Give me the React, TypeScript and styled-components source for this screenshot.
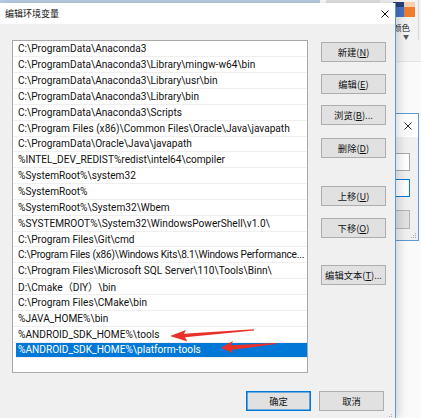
import React from "react";
import styled, { createGlobalStyle } from "styled-components";

const LATIN = `"Roboto", "Noto Sans CJK SC", sans-serif`;
const CJK = `"Noto Sans CJK SC", "Noto Sans", sans-serif`;

const Global = createGlobalStyle`
  html, body { margin: 0; padding: 0; background: #fbfbfb; }
  body { width: 421px; height: 418px; overflow: hidden; }
`;

const Desktop = styled.div`
  position: relative;
  width: 421px;
  height: 418px;
  overflow: hidden;
  background: #fafafa;
`;

/* ---------- background windows ---------- */
const TopStrip = styled.div`
  position: absolute;
  left: 0;
  top: 0;
  width: 421px;
  height: 3px;
  display: flex;
  background: #ffffff;
`;
const StripPart = styled.div<{ $w: number; $c: string }>`
  width: ${(p) => p.$w}px;
  height: 100%;
  background: ${(p) => p.$c};
`;

const Ribbon = styled.div`
  position: absolute;
  left: 380px;
  top: 0;
  width: 41px;
  height: 62px;
  background: #f3f3f3;
  border-bottom: 1px solid #e4e4e4;
  box-sizing: border-box;
  display: flex;
`;
const RibbonGroup = styled.div`
  width: 39px;
  height: 40px;
  border-right: 1px solid #d6d6d6;
  display: flex;
  flex-direction: column;
  align-items: flex-start;
  padding: 2px 0 0 13px;
  box-sizing: border-box;
`;
const ColorIcon = styled.div`
  display: flex;
  width: 22px;
  height: 15px;
`;
const Swatch = styled.div<{ $top: string; $main: string }>`
  flex: 1;
  background: linear-gradient(${(p) => p.$top} 0 33%, ${(p) => p.$main} 33% 100%);
`;
const RibbonLabel = styled.div`
  font-family: ${CJK};
  font-size: 8.5px;
  line-height: 10px;
  margin-top: 5px;
  color: #222;
  white-space: nowrap;
`;
const RibbonCaret = styled.div`
  font-family: ${LATIN};
  font-size: 6px;
  line-height: 6px;
  margin: 2px 0 0 10px;
  color: #555;
`;

const SecondWin = styled.div`
  position: absolute;
  left: 360px;
  top: 113px;
  width: 59px;
  height: 128px;
  border: 1px solid #5d9bd6;
  box-sizing: border-box;
  background: #f0f0f0;
  display: flex;
  flex-direction: column;
`;
const SecondTitle = styled.div`
  height: 23px;
  background: #ffffff;
  display: flex;
  align-items: center;
  justify-content: flex-end;
  padding-right: 6px;
`;
const SecondBody = styled.div`
  flex: 1;
  display: flex;
  flex-direction: column;
  align-items: flex-end;
  padding: 16px 8px 0 0;
  gap: 8px;
  position: relative;
`;
const MiniInput = styled.div<{ $focus?: boolean }>`
  width: 40px;
  height: 18px;
  box-sizing: border-box;
  background: #fff;
  border: 1px solid ${(p) => (p.$focus ? "#0078d7" : "#a9a9a9")};
`;
const MiniButton = styled.div`
  width: 40px;
  height: 19px;
  margin-top: 5px;
  box-sizing: border-box;
  background: #e1e1e1;
  border: 1px solid #b4b4b4;
`;
const Grip = styled.svg`
  position: absolute;
  right: 1px;
  bottom: 1px;
`;

/* ---------- main dialog ---------- */
const Dialog = styled.div`
  position: absolute;
  left: 0;
  top: 3px;
  width: 396px;
  height: 415px;
  z-index: 2;
  box-sizing: border-box;
  background: #f0f0f0;
  border-right: 1px solid #5b9bd5;
  box-shadow: 3px 0 9px rgba(0, 0, 0, 0.16);
  display: flex;
  flex-direction: column;
`;
const TitleBar = styled.div`
  height: 21px;
  flex: none;
  background: #ffffff;
  display: flex;
  align-items: center;
  justify-content: space-between;
  padding: 0 6px 0 5px;
`;
const Title = styled.div`
  font-family: ${CJK};
  font-size: 9px;
  line-height: 12px;
  color: #111;
`;
const Body = styled.div`
  display: grid;
  grid-template-columns: 296px 65px;
  column-gap: 13px;
  padding: 16px 0 0 12px;
`;
const ListBox = styled.div`
  height: 333px;
  box-sizing: border-box;
  border: 1px solid #a8a8a8;
  background: #ffffff;
  padding-top: 0.5px;
  overflow: hidden;
  display: flex;
  flex-direction: column;
`;
const Row = styled.div<{ $sel?: boolean; $tight?: boolean }>`
  height: 15.85px;
  flex: none;
  box-sizing: border-box;
  border-bottom: 1px solid #efefef;
  display: flex;
  align-items: center;
  padding-left: ${(p) => (p.$sel ? 2 : 5)}px;
  margin-left: ${(p) => (p.$sel ? 3 : 0)}px;
  background: ${(p) => (p.$sel ? "#0078d7" : "transparent")};
  color: ${(p) => (p.$sel ? "#ffffff" : "#111")};
  font-family: ${LATIN};
  font-size: 10.15px;
  letter-spacing: ${(p) => (p.$tight ? "-0.22px" : "0")};
  white-space: nowrap;
  overflow: hidden;
`;
const SideButtons = styled.div`
  display: flex;
  flex-direction: column;
  padding-top: 2px;
`;
const Btn = styled.div<{ $mt?: number; $default?: boolean }>`
  width: 65px;
  height: 20px;
  margin-top: ${(p) => p.$mt ?? 0}px;
  box-sizing: border-box;
  background: #e1e1e1;
  border: 1px solid ${(p) => (p.$default ? "#0078d7" : "#adadad")};
  box-shadow: ${(p) => (p.$default ? "inset 0 0 0 0.6px #0078d7" : "none")};
  display: flex;
  align-items: center;
  justify-content: center;
  font-family: ${CJK};
  font-size: 9.3px;
  color: #111;
  white-space: nowrap;
  u { text-decoration-thickness: 1px; text-underline-offset: 1px; }
`;
const Footer = styled.div`
  display: flex;
  justify-content: flex-end;
  gap: 8px;
  padding: 18px 11px 0 0;
`;
const DialogGrip = styled.svg`
  position: absolute;
  right: 2px;
  bottom: 0px;
`;

const Arrows = styled.svg`
  position: absolute;
  left: 0;
  top: 0;
  z-index: 3;
  pointer-events: none;
`;

const rows = [
  "C:\\ProgramData\\Anaconda3",
  "C:\\ProgramData\\Anaconda3\\Library\\mingw-w64\\bin",
  "C:\\ProgramData\\Anaconda3\\Library\\usr\\bin",
  "C:\\ProgramData\\Anaconda3\\Library\\bin",
  "C:\\ProgramData\\Anaconda3\\Scripts",
  "C:\\Program Files (x86)\\Common Files\\Oracle\\Java\\javapath",
  "C:\\ProgramData\\Oracle\\Java\\javapath",
  "%INTEL_DEV_REDIST%redist\\intel64\\compiler",
  "%SystemRoot%\\system32",
  "%SystemRoot%",
  "%SystemRoot%\\System32\\Wbem",
  "%SYSTEMROOT%\\System32\\WindowsPowerShell\\v1.0\\",
  "C:\\Program Files\\Git\\cmd",
  "C:\\Program Files (x86)\\Windows Kits\\8.1\\Windows Performance...",
  "C:\\Program Files\\Microsoft SQL Server\\110\\Tools\\Binn\\",
  "D:\\Cmake（DIY）\\bin",
  "C:\\Program Files\\CMake\\bin",
  "%JAVA_HOME%\\bin",
  "%ANDROID_SDK_HOME%\\tools",
  "%ANDROID_SDK_HOME%\\platform-tools",
];

const CloseX = ({ size = 8, color = "#111" }: { size?: number; color?: string }) => (
  <svg width={size} height={size} viewBox="0 0 8 8">
    <path d="M0.5 0.5 L7.5 7.5 M7.5 0.5 L0.5 7.5" stroke={color} strokeWidth="1" fill="none" />
  </svg>
);

export default function App() {
  return (
    <Desktop>
      <Global />
      <TopStrip>
        <StripPart $w={320} $c="#b9cfe6" />
        <StripPart $w={6} $c="#ffffff" />
        <StripPart $w={67} $c="#e4e4e4" />
      </TopStrip>

      <Ribbon>
        <RibbonGroup>
          <ColorIcon>
            <Swatch $top="#24407a" $main="#4472c4" />
            <Swatch $top="#f6cfae" $main="#ed7d31" />
          </ColorIcon>
          <RibbonLabel>颜色</RibbonLabel>
          <RibbonCaret>▼</RibbonCaret>
        </RibbonGroup>
      </Ribbon>

      <SecondWin>
        <SecondTitle>
          <CloseX size={8} color="#222" />
        </SecondTitle>
        <SecondBody>
          <MiniInput />
          <MiniInput $focus />
          <MiniButton />
          <Grip width="6" height="6" viewBox="0 0 6 6">
            <rect x="4" y="0" width="1" height="1" fill="#aaa" />
            <rect x="2" y="2" width="1" height="1" fill="#aaa" />
            <rect x="4" y="2" width="1" height="1" fill="#aaa" />
            <rect x="0" y="4" width="1" height="1" fill="#aaa" />
            <rect x="2" y="4" width="1" height="1" fill="#aaa" />
            <rect x="4" y="4" width="1" height="1" fill="#aaa" />
          </Grip>
        </SecondBody>
      </SecondWin>

      <Dialog>
        <TitleBar>
          <Title>编辑环境变量</Title>
          <CloseX size={8} />
        </TitleBar>
        <Body>
          <ListBox>
            {rows.map((r, i) => (
              <Row key={i} $sel={i === rows.length - 1} $tight={i === 13}>
                {r}
              </Row>
            ))}
          </ListBox>
          <SideButtons>
            <Btn>新建(<u>N</u>)</Btn>
            <Btn $mt={11.7}>编辑(<u>E</u>)</Btn>
            <Btn $mt={11.7}>浏览(<u>B</u>)...</Btn>
            <Btn $mt={12.2}>删除(<u>D</u>)</Btn>
            <Btn $mt={28.4}>上移(<u>U</u>)</Btn>
            <Btn $mt={11.6}>下移(<u>O</u>)</Btn>
            <Btn $mt={27.4}>编辑文本(<u>T</u>)...</Btn>
          </SideButtons>
        </Body>
        <Footer>
          <Btn $default>确定</Btn>
          <Btn>取消</Btn>
        </Footer>
        <DialogGrip width="6" height="4" viewBox="0 0 6 4">
          <rect x="4" y="0" width="1" height="1" fill="#b0b0b0" />
          <rect x="2" y="2" width="1" height="1" fill="#b0b0b0" />
          <rect x="4" y="2" width="1" height="1" fill="#b0b0b0" />
        </DialogGrip>
      </Dialog>

      <Arrows width="421" height="418" viewBox="0 0 421 418">
        <polygon
          points="170,336 186,330 184,333.8 254,329.3 254,330.5 185,337.3 187.5,341.6"
          fill="#e8312b"
        />
        <polygon
          points="220.7,347.7 233,341 231,345.2 276,343.1 276,344.1 231,349.9 234,353.6"
          fill="#e8312b"
        />
      </Arrows>
    </Desktop>
  );
}
